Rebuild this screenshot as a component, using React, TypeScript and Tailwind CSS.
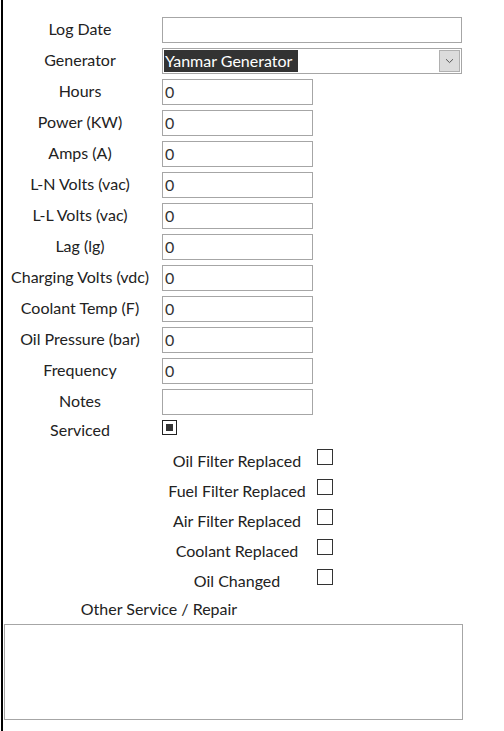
import React from "react";

const fields = [
  "Hours",
  "Power (KW)",
  "Amps (A)",
  "L-N Volts (vac)",
  "L-L Volts (vac)",
  "Lag (lg)",
  "Charging Volts (vdc)",
  "Coolant Temp (F)",
  "Oil Pressure (bar)",
  "Frequency",
];

const checks = [
  "Oil Filter Replaced",
  "Fuel Filter Replaced",
  "Air Filter Replaced",
  "Coolant Replaced",
  "Oil Changed",
];

function Label({ children }: { children: React.ReactNode }) {
  return <div className="w-[154px] shrink-0 text-center whitespace-nowrap pb-[2px]">{children}</div>;
}

export default function App() {
  return (
    <div
      className="w-[504px] h-[731px] bg-white text-[16px] leading-[20px] text-[#222] overflow-hidden"
      style={{ fontFamily: "Lato, 'Open Sans', sans-serif" }}
    >
      <div className="ml-px h-full border-l-2 border-black pt-[17px]">
        <div className="flex items-center h-[26px] mb-[5px]">
          <Label>Log Date</Label>
          <div className="ml-[5px] w-[300px] h-[26px] border border-[#a6a6a6]" />
        </div>
        <div className="flex items-center h-[26px] mb-[5px]">
          <Label>Generator</Label>
          <div className="ml-[5px] w-[300px] h-[26px] border border-[#a6a6a6] flex items-stretch p-px">
            <div className="bg-[#333333] text-white leading-[22px] pl-[1px] pr-[6px] whitespace-nowrap">Yanmar Generator</div>
            <div className="flex-1" />
            <div className="w-[21px] bg-[#dcdcdc] border border-[#b0b0b0] flex items-center justify-center">
              <svg width="9" height="6" viewBox="0 0 9 6" fill="none">
                <path d="M1 1.2 L4.5 4.6 L8 1.2" stroke="#555" strokeWidth="1" />
              </svg>
            </div>
          </div>
        </div>
        {fields.map((f) => (
          <div key={f} className="flex items-center h-[26px] mb-[5px]">
            <Label>{f}</Label>
            <div className="ml-[5px] w-[151px] h-[26px] border border-[#a6a6a6] pl-[2px] leading-[24px] text-[#333]">0</div>
          </div>
        ))}
        <div className="flex items-center h-[26px] mb-[5px]">
          <Label>Notes</Label>
          <div className="ml-[5px] w-[151px] h-[26px] border border-[#a6a6a6]" />
        </div>
        <div className="flex items-start h-[26px]">
          <div className="w-[154px] shrink-0 text-center">Serviced</div>
          <div className="ml-[5px] w-[15px] h-[15px] border border-[#222] flex items-center justify-center">
            <div className="w-[7px] h-[7px] bg-[#333]" />
          </div>
        </div>
        <div className="mt-[3px]">
          {checks.map((c) => (
            <div key={c} className="flex items-start h-[30px]">
              <div className="ml-[161px] w-[146px] text-center whitespace-nowrap pt-[2px]">{c}</div>
              <div className="ml-[7px] w-[16px] h-[16px] border border-[#333]" />
            </div>
          ))}
        </div>
        <div className="w-[312px] text-center">Other Service / Repair</div>
        <div className="mt-[5px] ml-[1px] w-[459px] h-[96px] border border-[#a6a6a6]" />
      </div>
    </div>
  );
}
